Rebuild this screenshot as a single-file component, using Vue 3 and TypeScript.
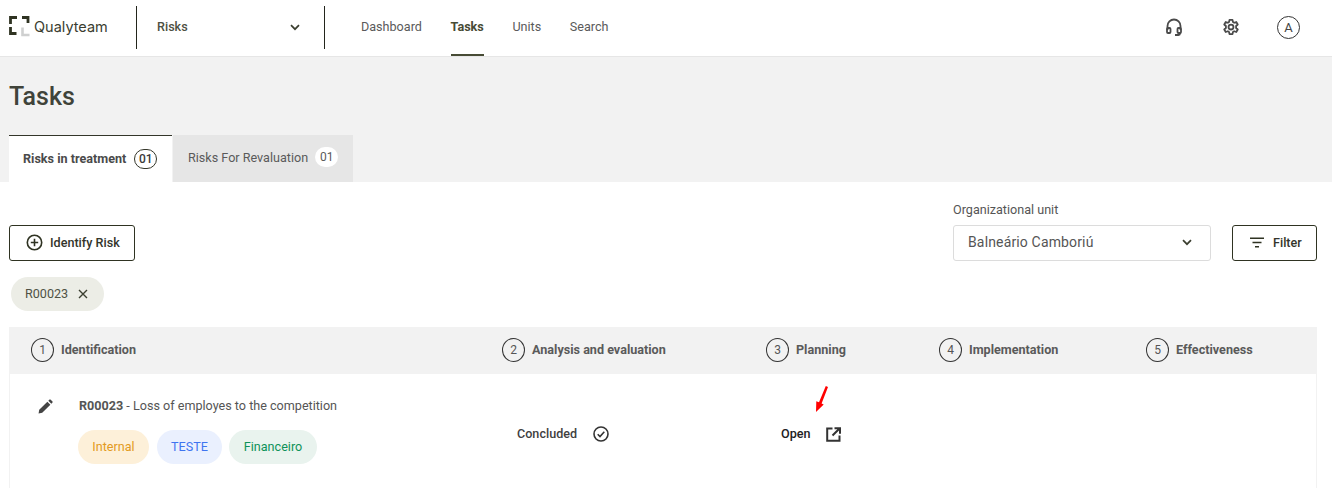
<script setup lang="ts">
const navItems = [
  { label: 'Dashboard', active: false },
  { label: 'Tasks', active: true },
  { label: 'Units', active: false },
  { label: 'Search', active: false },
]
const steps = [
  { n: 1, label: 'Identification' },
  { n: 2, label: 'Analysis and evaluation' },
  { n: 3, label: 'Planning' },
  { n: 4, label: 'Implementation' },
  { n: 5, label: 'Effectiveness' },
]
</script>

<template>
  <div class="page">
    <header class="topbar">
      <div class="brand">
        <svg class="logo" width="21" height="22" viewBox="0 0 21 22" fill="none">
          <path d="M1.500 9V2.500h6.500M13 2.500h6V8M1.500 12v6.500h6" stroke="#2f3322" stroke-width="2.800" />
          <path d="M13.500 12.500v7.500h7" stroke="#cfd0d0" stroke-width="2.600" />
        </svg>
        <span class="brand-name">Qualyteam</span>
      </div>
      <div class="module">
        <span class="module-name">Risks</span>
        <svg width="10" height="7" viewBox="0 0 10 7" fill="none"><path d="M1 1.200 5 5.200l4-4" stroke="#3b3f30" stroke-width="1.700" /></svg>
      </div>
      <nav class="nav">
        <a v-for="item in navItems" :key="item.label" class="nav-item" :class="{ active: item.active }">{{ item.label }}</a>
      </nav>
      <div class="actions">
        <svg width="18" height="18" viewBox="0 0 18 18" fill="none" stroke="#4a4a4a" stroke-width="1.800">
          <path d="M2.500 12V8a6.500 6.500 0 0 1 13 0v4" />
          <rect x="2" y="10" width="3.500" height="5" rx="1" />
          <rect x="12.500" y="10" width="3.500" height="5" rx="1" />
          <path d="M15 15v.5a1.500 1.500 0 0 1-1.500 1.500H10" />
        </svg>
        <svg width="18" height="18" viewBox="0 0 24 24" fill="none" stroke="#4a4a4a" stroke-width="2.400" stroke-linejoin="round">
          <path d="M10 2.500h4l.6 2.900 1.600.9 2.800-1 2 3.400-2.200 2v2.600l2.200 2-2 3.400-2.800-1-1.600.9-.6 2.900h-4l-.6-2.900-1.600-.9-2.800 1-2-3.400 2.200-2v-2.600l-2.200-2 2-3.400 2.800 1 1.600-.9z" />
          <circle cx="12" cy="12" r="3.300" />
        </svg>
        <span class="avatar">A</span>
      </div>
    </header>

    <section class="hero">
      <h1>Tasks</h1>
      <div class="tabs">
        <div class="tab tab-on">
          <span class="tab-on-label">Risks in treatment</span>
          <span class="count count-on">01</span>
        </div>
        <div class="tab tab-off">
          <span>Risks For Revaluation</span>
          <span class="count count-off">01</span>
        </div>
      </div>
    </section>

    <main class="content">
      <div class="toolbar">
        <button class="btn btn-identify">
          <svg width="17" height="17" viewBox="0 0 17 17" fill="none" stroke="#2f3322" stroke-width="1.600">
            <circle cx="8.500" cy="8.500" r="7.200" />
            <path d="M8.500 4.800v7.400M4.800 8.500h7.400" />
          </svg>
          <span>Identify Risk</span>
        </button>
        <div class="toolbar-right">
          <div class="field">
            <label>Organizational unit</label>
            <div class="select">
              <span>Balneário Camboriú</span>
              <svg width="10" height="7" viewBox="0 0 10 7" fill="none"><path d="M1 1.200 5 5.200l4-4" stroke="#3b3f30" stroke-width="1.700" /></svg>
            </div>
          </div>
          <button class="btn btn-filter">
            <svg width="14" height="11" viewBox="0 0 14 11" fill="none" stroke="#2f3322" stroke-width="1.500">
              <path d="M0 1.200h14M2.500 5.500h9M5 9.800h4" />
            </svg>
            <span>Filter</span>
          </button>
        </div>
      </div>

      <div class="chip-row">
        <span class="chip">
          <span class="chip-text">R00023</span>
          <svg width="10" height="10" viewBox="0 0 10 10" fill="none" stroke="#3b3f30" stroke-width="1.400"><path d="M1 1l8 8M9 1l-8 8" /></svg>
        </span>
      </div>

      <div class="board">
        <div class="grid board-head">
          <div v-for="step in steps" :key="step.n" class="step">
            <span class="step-n">{{ step.n }}</span>
            <span class="step-label">{{ step.label }}</span>
          </div>
        </div>
        <div class="grid board-row">
          <div class="risk">
            <svg class="pencil" width="15" height="15" viewBox="0 0 16 16" fill="#444">
              <path d="M.6 15.400 1.300 11.500 10 2.800l3.200 3.200-8.700 8.700zM11 1.800l1.100-1.100a1 1 0 0 1 1.400 0l1.800 1.800a1 1 0 0 1 0 1.400L14.200 5z" />
            </svg>
            <div class="risk-body">
              <p class="risk-title"><b>R00023</b> - Loss of employes to the competition</p>
              <div class="tags">
                <span class="tag tag-orange">Internal</span>
                <span class="tag tag-blue">TESTE</span>
                <span class="tag tag-green">Financeiro</span>
              </div>
            </div>
          </div>
          <div class="status status-a">
            <span class="status-text">Concluded</span>
            <svg width="16" height="16" viewBox="0 0 16 16" fill="none" stroke="#333" stroke-width="1.600">
              <circle cx="8" cy="8" r="7" />
              <path d="M4.700 8.200 7 10.500l4.300-4.700" />
            </svg>
          </div>
          <div class="status status-b">
            <span class="status-text">Open</span>
            <svg width="15" height="15" viewBox="0 0 15 15" fill="none" stroke="#333" stroke-width="2">
              <path d="M6.500 1.500H1.200v12.300h12.300V8.500" />
              <path d="M8.500 1.200h5.500v5.500M13.800 1.200 6.500 8.500" />
            </svg>
          </div>
          <div></div>
          <div></div>
        </div>
      </div>
    </main>

    <svg class="arrow" width="16" height="28" viewBox="0 0 16 28" fill="#ff0000">
      <path d="M11.800 1 14 2 7.600 18.500 9.700 19.400 2 27 2.300 16.200 5 17.300z" />
    </svg>
  </div>
</template>

<style>
html, body { margin: 0; background: #fff; }
</style>

<style scoped>
.page {
  position: relative;
  width: 1332px;
  height: 488px;
  overflow: hidden;
  background: #fff;
  font-family: Roboto, "Liberation Sans", sans-serif;
  color: #4a4a4a;
  font-size: 12.6px;
}
.topbar {
  display: flex;
  align-items: center;
  height: 56px;
  border-bottom: 1px solid #e6e6e6;
  box-sizing: content-box;
}
.brand {
  display: flex;
  align-items: center;
  width: 136px;
  padding-left: 9px;
  box-sizing: border-box;
  gap: 4px;
}
.logo { margin-bottom: 4px; }
.brand-name {
  font-family: Inter, sans-serif;
  font-size: 14.5px;
  color: #3a3d30;
  margin-bottom: 4px;
}
.module {
  display: flex;
  align-items: center;
  justify-content: space-between;
  width: 189px;
  height: 43px;
  box-sizing: border-box;
  padding: 0 24px 0 20px;
  border-left: 1px solid #23251c;
  border-right: 1px solid #23251c;
  font-weight: 500;
  color: #4d5042;
  margin-bottom: 2px;
}
.module-name { margin-bottom: 1px; }
.nav {
  display: flex;
  align-self: stretch;
  gap: 28.6px;
  margin-left: 36px;
}
.nav-item {
  display: flex;
  align-items: center;
  height: 56px;
  box-sizing: border-box;
  padding-bottom: 3px;
  color: #5a5a5a;
}
.nav-item.active {
  font-weight: 700;
  color: #474b35;
  border-bottom: 2px solid #474b35;
  padding-bottom: 1px;
}
.actions {
  display: flex;
  align-items: center;
  gap: 39px;
  margin-left: auto;
  margin-right: 32px;
  margin-bottom: 2px;
}
.avatar {
  display: flex;
  align-items: center;
  justify-content: center;
  width: 21px;
  height: 21px;
  border: 1px solid #333;
  border-radius: 50%;
  font-size: 13px;
  color: #444;
  margin-left: -2px;
}
.hero {
  height: 125px;
  background: #f2f2f2;
  padding-left: 9px;
  display: flex;
  flex-direction: column;
}
h1 {
  margin: 24px 0 0;
  height: 54px;
  font-size: 25px;
  line-height: 32px;
  font-weight: 500;
  color: #40433a;
}
.tabs { display: flex; gap: 1px; }
.tab {
  display: flex;
  align-items: center;
  height: 47px;
  box-sizing: border-box;
  padding-left: 14px;
  gap: 7px;
}
.tab-on {
  width: 163px;
  background: #fff;
  border-top: 1px solid #34362a;
  font-weight: 700;
  color: #4a4a4a;
  gap: 8px;
}
.tab-on-label { margin-bottom: 2px; }
.tab-off {
  width: 180px;
  background: #e6e6e6;
  padding-left: 15px;
  padding-bottom: 2px;
  color: #5a5a5a;
}
.count {
  display: flex;
  align-items: center;
  justify-content: center;
  width: 23px;
  height: 20px;
  border-radius: 10px;
  box-sizing: border-box;
  font-size: 12px;
}
.count-on { border: 1px solid #34362a; color: #3a3a3a; font-weight: 500; }
.count-off { background: #fff; margin-top: -1px; }
.toolbar {
  display: flex;
  align-items: flex-end;
  justify-content: space-between;
  padding: 20px 15px 0 9px;
}
.toolbar-right { display: flex; align-items: flex-end; gap: 21px; }
.field { display: flex; flex-direction: column; }
.field label {
  line-height: 15px;
  margin-bottom: 8px;
  color: #555;
}
.select {
  display: flex;
  align-items: center;
  justify-content: space-between;
  width: 258px;
  height: 36px;
  box-sizing: border-box;
  padding: 0 18px 2px 14px;
  border: 1px solid #dcdcdc;
  border-radius: 3px;
  font-size: 14px;
  letter-spacing: 0.15px;
  color: #555;
}
.btn {
  display: flex;
  align-items: center;
  height: 36px;
  box-sizing: border-box;
  background: #fff;
  border: 1px solid #2f3322;
  border-radius: 3px;
  font-family: inherit;
  font-size: 12.6px;
  font-weight: 500;
  color: #33352b;
  padding: 0 0 2px;
}
.btn-identify { width: 126px; padding-left: 16px; gap: 7px; }
.btn-filter { width: 85px; padding-left: 17px; gap: 9px; }
.chip-row { padding: 16px 0 0 11px; }
.chip {
  display: inline-flex;
  align-items: center;
  width: 93px;
  height: 34px;
  box-sizing: border-box;
  padding: 0 0 1px 14px;
  border-radius: 17px;
  background: #ecede6;
  color: #4f5245;
}
.chip-text { width: 53px; }
.board { margin: 16px 15px 0 9px; }
.grid {
  display: grid;
  grid-template-columns: 471px 264px 173px 207px 1fr;
}
.board-head {
  align-items: center;
  height: 47px;
  padding-left: 22px;
  background: #f2f2f2;
}
.step { display: flex; align-items: center; gap: 7px; padding-bottom: 1px; }
.step-n {
  display: flex;
  align-items: center;
  justify-content: center;
  width: 23px;
  height: 24px;
  box-sizing: border-box;
  border: 1px solid #333;
  border-radius: 50%;
  font-size: 12px;
  color: #555;
}
.step-label { font-weight: 700; color: #5a5a5a; margin-bottom: 2px; }
.board-row {
  padding-left: 21px;
  height: 114px;
  border-left: 1px solid #f2f2f2;
  border-right: 1px solid #f2f2f2;
  box-sizing: border-box;
}
.risk { display: flex; padding: 25px 0 0 7px; gap: 26px; }
.pencil { flex: none; }
.risk-body { margin-top: -3px; }
.risk-title { margin: 0; line-height: 20px; color: #555; }
.risk-title b { font-weight: 700; }
.tags { display: flex; margin-top: 14px; margin-left: -1px; }
.tag {
  display: flex;
  align-items: center;
  height: 34px;
  box-sizing: border-box;
  justify-content: center;
  padding-bottom: 1px;
  border-radius: 17px;
}
.tag-orange { width: 71px; margin-right: 8px; background: #fdf0d9; color: #e39a22; }
.tag-blue { width: 65px; margin-right: 7px; background: #eaf0fe; color: #3f74f0; }
.tag-green { width: 88px; background: #e9f3ee; color: #0e9259; }
.status {
  display: flex;
  align-items: center;
  align-self: start;
  height: 20px;
  margin-top: 50px;
  color: #3f3f3f;
  font-weight: 500;
}
.status-text { margin-bottom: 2px; }
.status-a { padding-left: 15px; gap: 16px; }
.status-b { padding-left: 15px; gap: 15px; color: #222; }
.arrow {
  position: absolute;
  left: 814px;
  top: 385px;
}
</style>
